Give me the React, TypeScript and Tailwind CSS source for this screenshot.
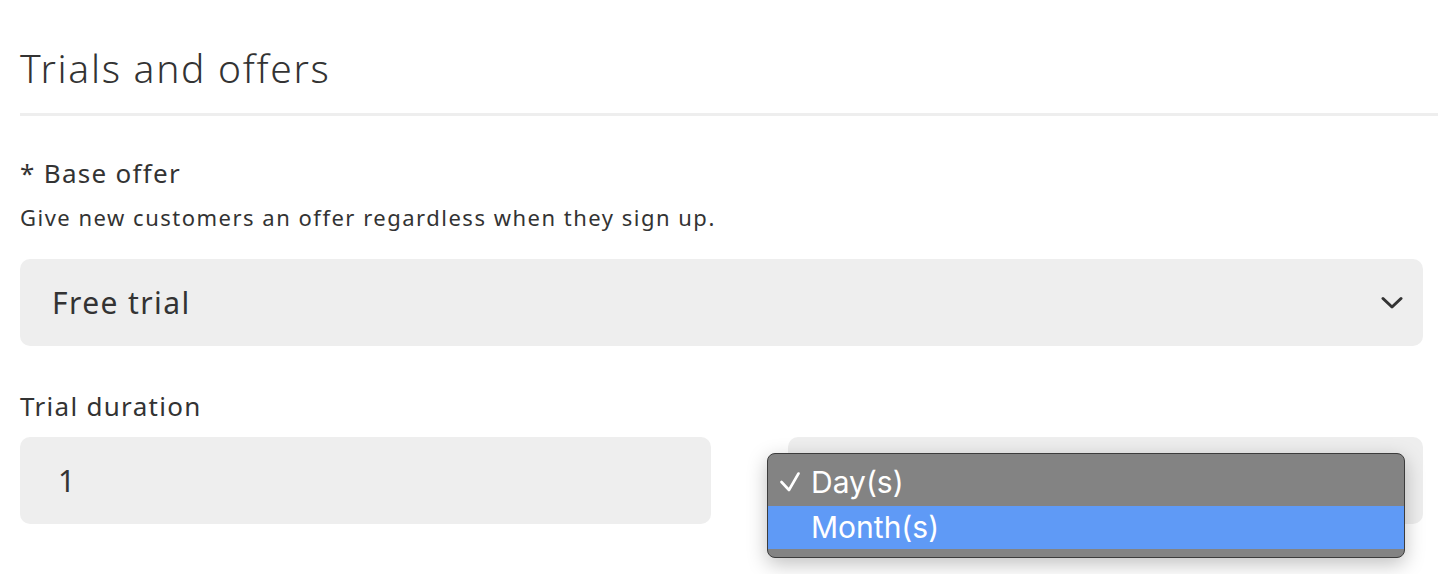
import React from "react";

export default function App() {
  return (
    <div className="w-[1438px] h-[574px] bg-white relative overflow-hidden text-[#333333]" style={{ fontFamily: '"Noto Sans", sans-serif' }}>
      <div className="pl-5 pt-[44px]">
        <h1 className="text-[39px] leading-[48px] font-light tracking-[1.7px] text-[#333333]">Trials and offers</h1>
      </div>
      <div className="ml-5 mt-[21px] h-[3px] bg-[#eeeeee]" />
      <div className="pl-5 pr-[15px] pt-[40px]">
        <div className="text-[26px] leading-[34px] tracking-[1.3px]">* Base offer</div>
        <div className="text-[22px] leading-[30px] tracking-[1.5px] mt-[12px]">Give new customers an offer regardless when they sign up.</div>
        <div className="mt-[27px] h-[87px] rounded-[10px] bg-[#eeeeee] flex items-center justify-between pl-8 pr-5">
          <span className="text-[30px] tracking-[1.4px]">Free trial</span>
          <svg width="22" height="14" viewBox="0 0 22 14" fill="none">
            <path d="M2 2.5 L11 11 L20 2.5" stroke="#333333" strokeWidth="3" strokeLinecap="round" strokeLinejoin="round" />
          </svg>
        </div>
        <div className="text-[26px] leading-[34px] tracking-[1.3px] mt-[43px]">Trial duration</div>
        <div className="flex mt-[14px]">
          <div className="w-[691px] h-[87px] rounded-[10px] bg-[#eeeeee] flex items-center pl-[38px]">
            <span className="text-[30px]">1</span>
          </div>
          <div className="ml-[77px] flex-1 h-[87px] rounded-[10px] bg-[#eeeeee] relative">
            <div
              className="absolute left-[-21px] top-[16px] w-[638px] h-[105px] rounded-[8px] bg-[#838383] border border-[#3c3c3c] shadow-[0_6px_20px_rgba(0,0,0,0.25)] overflow-hidden pt-[4px] text-white"
              style={{ fontFamily: '"Inter", "Liberation Sans", sans-serif' }}
            >
              <div className="h-[48px] flex items-center">
                <span className="w-[43px] pl-[12px] flex items-center">
                  <svg width="20" height="20" viewBox="0 0 20 20" fill="none">
                    <path d="M1.5 10 L9 18 L18.5 1.5" stroke="white" strokeWidth="2.6" strokeLinecap="round" strokeLinejoin="round" />
                  </svg>
                </span>
                <span className="text-[30px]">Day(s)</span>
              </div>
              <div className="h-[43px] flex items-center bg-[#5f9af6]">
                <span className="w-[43px]" />
                <span className="text-[30px]">Month(s)</span>
              </div>
            </div>
          </div>
        </div>
      </div>
    </div>
  );
}
